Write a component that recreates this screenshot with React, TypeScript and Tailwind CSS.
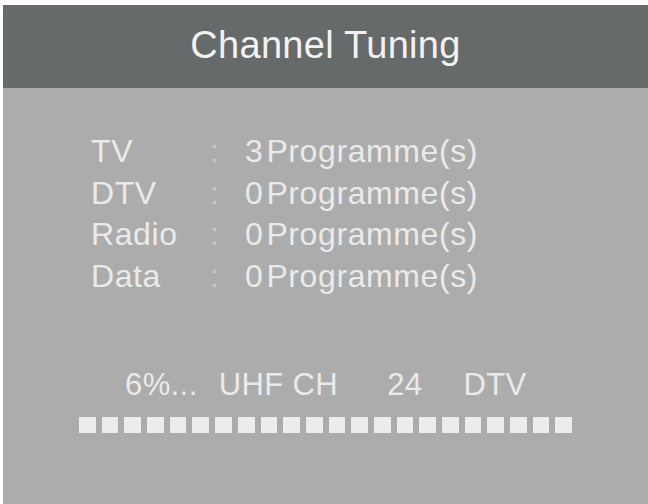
const rows = [
  { label: "TV", count: 3 },
  { label: "DTV", count: 0 },
  { label: "Radio", count: 0 },
  { label: "Data", count: 0 },
];

const BLOCKS = 22;

export default function App() {
  return (
    <div
      className="flex h-[504px] w-[648px] flex-col overflow-hidden bg-white pl-[3px] pt-[5px]"
      style={{ fontFamily: '"Liberation Sans", Arial, sans-serif' }}
    >
      <div className="flex h-[83px] shrink-0 items-center justify-center bg-[#666a6a] pb-[4px]">
        <h1 className="text-[38px] leading-none tracking-[0.3px] text-[#f2f2f2]">Channel Tuning</h1>
      </div>

      <div className="flex flex-1 flex-col bg-[#acacac] pt-[43px]">
        <div className="flex flex-col pl-[88px]">
          {rows.map((r) => (
            <div
              key={r.label}
              className="flex text-[32px] leading-[41.5px] tracking-[0.6px] text-[#eaeaea]"
            >
              <span className="w-[119px]">{r.label}</span>
              <span className="w-[35px] text-[#c6c6c6]">:</span>
              <span>
                {r.count}
                <span className="ml-[3px]">Programme(s)</span>
              </span>
            </div>
          ))}
        </div>

        <div className="mt-[72px] flex pl-[122px] text-[31px] leading-none tracking-[0.4px] text-[#eaeaea]">
          <span>6%...</span>
          <span className="ml-[21px]">UHF CH</span>
          <span className="ml-[49px]">24</span>
          <span className="ml-[41px]">DTV</span>
        </div>

        <div className="mt-[17px] flex gap-[6px] pl-[76px]">
          {Array.from({ length: BLOCKS }).map((_, i) => (
            <div key={i} className="h-[16px] w-[16.7px] bg-[#ececec]" />
          ))}
        </div>
      </div>
    </div>
  );
}
